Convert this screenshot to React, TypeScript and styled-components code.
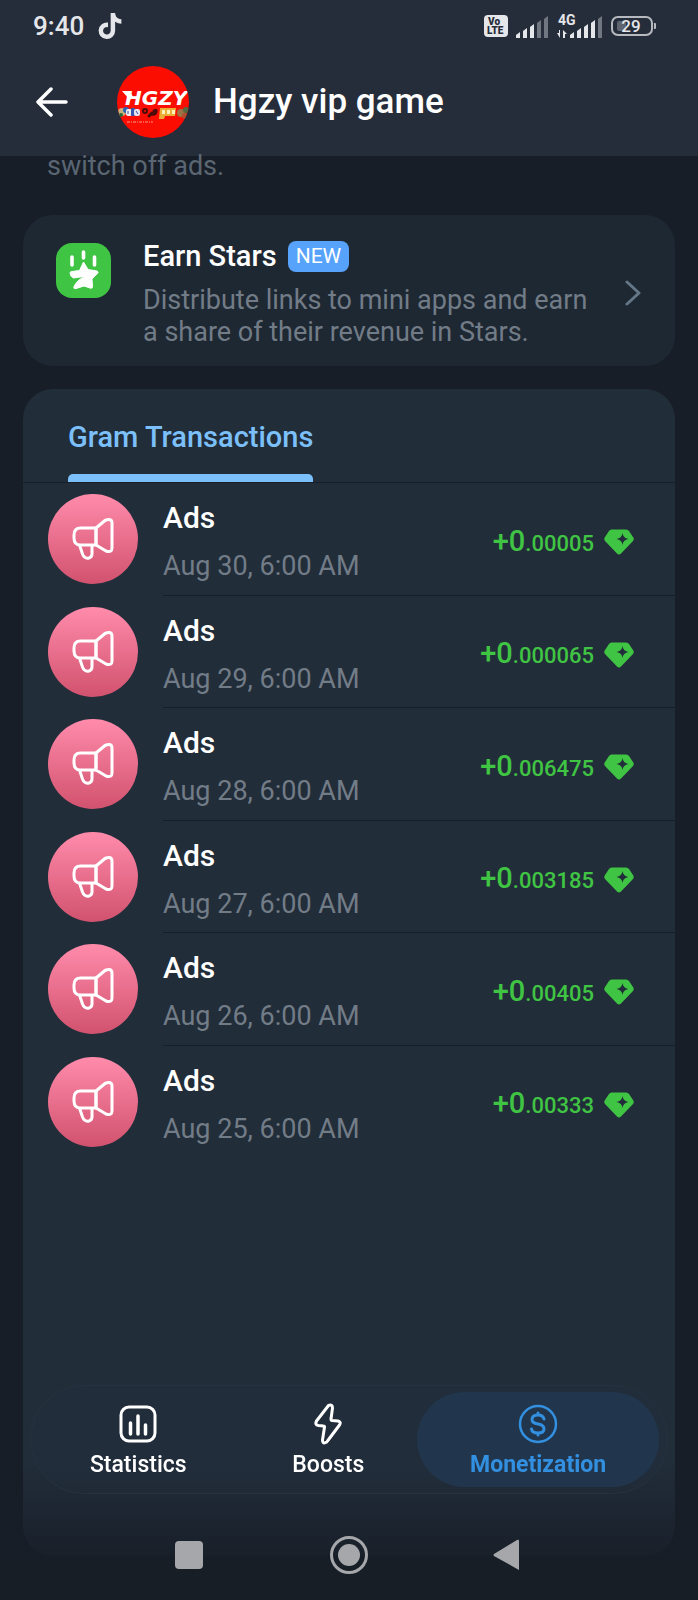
import React from "react";
import styled, { createGlobalStyle } from "styled-components";
import { FaTiktok } from "react-icons/fa";

const colors = {
  page: "#171e27",
  header: "#262d3a",
  card: "#1e2833",
  panel: "#222d3a",
  line: "#161f29",
  muted: "#727c87",
  accent: "#7cc0fb",
  active: "#3390e0",
  green: "#40c443",
  status: "#e4e6ea",
};

const GlobalStyle = createGlobalStyle`
  *, *::before, *::after { box-sizing: border-box; }
  body {
    margin: 0;
    background: ${colors.page};
    color: #fff;
    font-family: Roboto, "Liberation Sans", sans-serif;
  }
  button { font: inherit; color: inherit; border: 0; padding: 0; background: none; cursor: pointer; }
  h1, h2, p, ul { margin: 0; padding: 0; }
  svg { display: block; flex: none; }
`;

const Page = styled.div`
  min-height: 100vh;
  display: flex;
  flex-direction: column;
`;

const Header = styled.header`
  background: ${colors.header};
`;

const StatusBar = styled.div`
  height: 52px;
  padding: 0 42px 0 33px;
  display: flex;
  align-items: center;
  justify-content: space-between;
  color: ${colors.status};
`;

const StatusGroup = styled.div<{ $gap: number }>`
  display: flex;
  align-items: center;
  gap: ${(p) => p.$gap}px;
`;

const Clock = styled.time`
  font-size: 26px;
  line-height: 32px;
  font-weight: 500;
`;

const Toolbar = styled.div`
  height: 104px;
  padding: 0 34px 4px;
  display: flex;
  align-items: center;
`;

const BackButton = styled.button`
  width: 36px;
  height: 48px;
  display: grid;
  place-items: center;
`;

const Avatar = styled.svg`
  margin: 0 24px 0 47px;
`;

const Title = styled.h1`
  font-size: 35px;
  line-height: 40px;
  font-weight: 500;
`;

const Content = styled.main`
  flex: 1;
  display: flex;
  flex-direction: column;
  gap: 23px;
  padding: 0 23px 44px;
`;

const Hint = styled.p`
  height: 36px;
  padding-left: 24px;
  font-size: 27px;
  line-height: 20px;
  color: #5b6673;
`;

const EarnCard = styled.a`
  padding: 22px 34px 18px 33px;
  display: flex;
  align-items: flex-start;
  border-radius: 30px;
  background: ${colors.card};
  color: inherit;
  text-decoration: none;
`;

const EarnBody = styled.div`
  flex: 1;
  margin: 3px 0 0 32px;
`;

const EarnHeading = styled.div`
  display: flex;
  align-items: center;
  gap: 11px;
  height: 32px;
`;

const EarnTitle = styled.h2`
  font-size: 29px;
  line-height: 32px;
  font-weight: 500;
`;

const Badge = styled.span`
  padding: 0 8px;
  border-radius: 8px;
  background: #57a2fb;
  font-size: 21px;
  line-height: 31px;
`;

const EarnText = styled.p`
  margin-top: 12px;
  max-width: 460px;
  font-size: 27px;
  line-height: 32px;
  color: ${colors.muted};
`;

const EarnIcon = styled.svg`
  margin-top: 6px;
`;

const Chevron = styled.svg`
  align-self: center;
`;

const Panel = styled.section`
  flex: 1;
  border-radius: 30px;
  background: ${colors.panel};
`;

const Tabs = styled.div`
  height: 94px;
  padding: 0 45px;
  display: flex;
  border-bottom: 1px solid ${colors.line};
`;

const Tab = styled.button`
  padding-top: 32px;
  display: flex;
  flex-direction: column;
  justify-content: space-between;
  color: ${colors.accent};
  font-size: 29px;
  line-height: 32px;
  font-weight: 500;
`;

const TabMarker = styled.span`
  width: 100%;
  height: 8px;
  border-radius: 5px 5px 0 0;
  background: ${colors.accent};
`;

const List = styled.ul`
  min-height: 675px;
  list-style: none;
  display: grid;
  grid-auto-rows: 1fr;
`;

const Row = styled.li`
  padding-left: 25px;
  display: flex;
  gap: 25px;
`;

const RowIcon = styled.div`
  width: 90px;
  height: 90px;
  margin-top: 11px;
  border-radius: 50%;
  background: linear-gradient(#ff8bab, #d1526e);
  display: grid;
  place-items: center;
`;

const RowBody = styled.div`
  flex: 1;
  display: flex;
  justify-content: space-between;
  align-items: center;
  padding: 7px 41px 0 0;
  border-bottom: 1px solid ${colors.line};

  ${Row}:last-child & { border-bottom-color: transparent; }
`;

const RowTitle = styled.h2`
  font-size: 30px;
  line-height: 36px;
  font-weight: 500;
`;

const RowDate = styled.p`
  margin-top: 12px;
  font-size: 27px;
  line-height: 36px;
  color: ${colors.muted};
`;

const Amount = styled.div`
  display: flex;
  align-items: center;
  gap: 10px;
  color: ${colors.green};
  font-size: 29px;
  line-height: 36px;
  font-weight: 500;
`;

const Fraction = styled.span`
  font-size: 22px;
`;

const Dock = styled.div`
  position: fixed;
  inset: auto 0 0 0;
  padding: 0 30px;
  background: linear-gradient(rgba(23, 30, 39, 0) 80px, rgba(23, 30, 39, 0.9) 176px);
`;

const NavPill = styled.nav`
  height: 109px;
  padding: 6px 8px 6px 6px;
  display: flex;
  border: 1px solid #26323f;
  border-radius: 55px;
  background: linear-gradient(#222d3b 75%, #202a37);
`;

const NavItem = styled.button<{ $active?: boolean }>`
  flex: 1 1 auto;
  padding-top: 3px;
  display: flex;
  flex-direction: column;
  align-items: center;
  justify-content: center;
  gap: 6px;
  border-radius: 48px;
  background: ${(p) => (p.$active ? "#21364c" : "transparent")};
  color: ${(p) => (p.$active ? colors.active : "#fff")};
  font-size: 23px;
  line-height: 28px;
  font-weight: ${(p) => (p.$active ? 700 : 500)};
`;

const SystemBar = styled.div`
  height: 106px;
  padding-top: 16px;
  display: flex;
  justify-content: center;
  align-items: center;
`;

const SystemButton = styled.button`
  width: 160px;
  height: 60px;
  display: grid;
  place-items: center;
  color: #a5a7ab;
`;

const Signal = ({ bars, network }: { bars: number; network?: string }) => (
  <svg width={network ? 46 : 33} height="32" viewBox={network ? "-13 -4 46 32" : "0 -4 33 32"} fill="currentColor">
    {[5, 9, 13, 17, 21].map((h, i) => (
      <path
        key={h}
        d={`M${i * 7} ${24 - h + 2}l4-3v${h + 1}h-4z`}
        opacity={i < bars ? 1 : 0.4}
      />
    ))}
    {network && (
      <>
        <text x="-12" y="11" fontSize="14" fontWeight="700">{network}</text>
        <path d="M-11 16v3h-2l3 5v-8zM-7 24v-8l4 4h-2v4z" />
      </>
    )}
  </svg>
);

const VoLte = () => (
  <svg width="24" height="22" viewBox="0 0 24 22">
    <rect width="24" height="22" rx="4" fill="currentColor" />
    <g fill={colors.header} fontWeight="900" fontSize="10">
      <text x="4" y="10">Vo</text>
      <text x="3" y="19">LTE</text>
    </g>
  </svg>
);

const Battery = ({ level }: { level: number }) => (
  <svg width="45" height="20" viewBox="0 0 45 20">
    <rect x="6" y="5" width="9" height="10" rx="2" fill="#5f6570" />
    <rect x="1" y="1" width="40" height="18" rx="6" fill="none" stroke="#b6b9bf" strokeWidth="2" />
    <path d="M43 7h1q1 0 1 1v4q0 1-1 1h-1z" fill="#b6b9bf" />
    <text x="20" y="16" textAnchor="middle" fontSize="17" fontWeight="500" fill="currentColor">{level}</text>
  </svg>
);

const ChannelAvatar = () => (
  <Avatar width="72" height="72" viewBox="0 0 72 72" role="img" aria-label="Channel picture">
    <defs>
      <clipPath id="round"><circle cx="36" cy="36" r="36" /></clipPath>
    </defs>
    <g clipPath="url(#round)">
      <rect width="72" height="72" fill="#fb0d02" />
      <path d="M5 25h8l3 6-3 3z" fill="#fff" />
      <text x="8" y="39" fontFamily="DejaVu Sans, sans-serif" fontSize="20" fontWeight="700" fontStyle="italic" fill="#fff">HGZY</text>
      <circle cx="5" cy="46" r="4" fill="#c9b07b" />
      <circle cx="9" cy="44" r="3" fill="#2c64b5" />
      <circle cx="4" cy="49" r="2" fill="#276b3c" />
      <rect x="9" y="43" width="6" height="7" rx="2" fill="#eee" />
      <rect x="14" y="42" width="4" height="8" rx="1" fill="#3656b0" />
      <rect x="17" y="43" width="6" height="7" rx="2" fill="#e6e4f3" />
      <path d="M11 45v3M19 45l2 3" stroke="#3d4aa0" strokeWidth="1" />
      <circle cx="28" cy="45" r="2" fill="none" stroke="#4b0b09" strokeWidth="2" />
      <path d="M32 50l3-3M37 45q3-2 2 1t-4 2" fill="none" stroke="#4b0b09" strokeWidth="3" strokeLinecap="round" />
      <path d="M43 42h16l-1 8H48l-1 3h-5z" fill="#ebae35" />
      <path d="M45 44h3v4h-3zM50 44h3v4h-3zM55 44h3v4h-3z" fill="#fff0b8" />
      <circle cx="64" cy="47" r="4" fill="#9b7344" />
      <circle cx="69" cy="44" r="3" fill="#526c42" />
      <circle cx="68" cy="50" r="3" fill="#b04e2e" />
      <path d="M10 56h26" stroke="#ff9c8e" strokeWidth="1" strokeDasharray="3 1 1 1" />
    </g>
  </Avatar>
);

const StarsIcon = () => (
  <EarnIcon width="55" height="55" viewBox="0 0 55 55">
    <rect width="55" height="55" rx="16" fill={colors.green} />
    <path d="M16 14v8M27.500 9v6M38.500 14v8" stroke="#fff" strokeWidth="3.600" strokeLinecap="round" />
    <path
      d="M27.500 19l4.500 7.500 9 1.500q2 1 .5 2.500l-5.500 5.500.5 8q-.5 2-2.500 1l-6-2-8 2.500q-3 .5-2-2 4-8 12-10-7 .5-12.500 1.500-3-1-3.500-5 0-1.500 2-1.500l7.500-1z"
      fill="#fff" stroke="#fff" strokeWidth="1" strokeLinejoin="round"
    />
  </EarnIcon>
);

const Megaphone = () => (
  <svg width="42" height="42" viewBox="0 0 42 42" fill="none" stroke="#fff" strokeWidth="3" strokeLinejoin="round">
    <path d="M24 10H8.500Q2 10 2 17v3q0 7 6.500 7H24z" />
    <path d="M24 10l9-7.500q7-3 7 3V30q0 5-6 3l-10-6z" />
    <path d="M7.500 27l3 9q2 5 6.500 4 3-1 3-4v-9" />
  </svg>
);

const Gem = () => (
  <svg width="30" height="26" viewBox="0 0 30 26" fill="currentColor">
    <path
      fillRule="evenodd"
      d="M7.500.5h14.500q2 0 3 1.500l4 6q1.500 2 0 4L17 24.500q-2 2-4 0L1 12q-1.500-2 0-4l4-6Q6 .5 7.500.5zM18.500 4q.5 5 6 6-5.500 1-6 6-.5-5-6-6 5.500-1 6-6z"
    />
  </svg>
);

const StatisticsIcon = () => (
  <svg width="40" height="42" viewBox="0 0 40 42" fill="none" stroke="currentColor" strokeWidth="3" strokeLinecap="round">
    <rect x="3" y="4" width="34" height="34" rx="8" />
    <path d="M12.500 20v11M20 13v18M27.500 22v9" strokeWidth="3.500" />
  </svg>
);

const BoostIcon = () => (
  <svg width="40" height="42" viewBox="0 0 40 42" fill="none" stroke="currentColor" strokeWidth="3" strokeLinejoin="round">
    <path d="M20.500 2.500L8.500 18q-2 4 2 4.500l5 .5q1 0 1 1l-2 13q0 4 3 2.500 1 0 2-1.500L31.500 22q2-3-1.500-4l-6-.5q-1 0-1-1.500l1.500-11q0-4-4-2.500z" />
  </svg>
);

const DollarIcon = () => (
  <svg width="40" height="42" viewBox="0 0 40 42" fill="none" stroke="currentColor" strokeWidth="3" strokeLinecap="round">
    <circle cx="20" cy="21" r="18" strokeWidth="2.500" />
    <path d="M26 16q-1-4-6-4-6 0-6 4.500 0 3.500 6 4.500t6 5q0 4-6 4t-6.500-4M20 10v2M20 30v2" />
  </svg>
);

const transactions = [
  { day: 30, fraction: "00005" },
  { day: 29, fraction: "000065" },
  { day: 28, fraction: "006475" },
  { day: 27, fraction: "003185" },
  { day: 26, fraction: "00405" },
  { day: 25, fraction: "00333" },
];

export default function App() {
  return (
    <Page>
      <GlobalStyle />
      <Header>
        <StatusBar>
          <StatusGroup $gap={13}>
            <Clock>9:40</Clock>
            <FaTiktok size={26} />
          </StatusGroup>
          <StatusGroup $gap={8}>
            <VoLte />
            <Signal bars={3} />
            <Signal bars={4} network="4G" />
            <Battery level={29} />
          </StatusGroup>
        </StatusBar>
        <Toolbar>
          <BackButton aria-label="Back">
            <svg width="32" height="30" viewBox="0 0 32 30" fill="none" stroke="#fff" strokeWidth="3.500" strokeLinecap="round" strokeLinejoin="round">
              <path d="M15 2L2 15l13 13M2 15h28" />
            </svg>
          </BackButton>
          <ChannelAvatar />
          <Title>Hgzy vip game</Title>
        </Toolbar>
      </Header>

      <Content>
        <Hint>switch off ads.</Hint>
        <EarnCard href="#earn-stars">
          <StarsIcon />
          <EarnBody>
            <EarnHeading>
              <EarnTitle>Earn Stars</EarnTitle>
              <Badge>NEW</Badge>
            </EarnHeading>
            <EarnText>Distribute links to mini apps and earn a share of their revenue in Stars.</EarnText>
          </EarnBody>
          <Chevron width="16" height="26" viewBox="0 0 16 26" fill="none" stroke="#637787" strokeWidth="3" strokeLinecap="round" strokeLinejoin="round">
            <path d="M2 2l12 11L2 24" />
          </Chevron>
        </EarnCard>

        <Panel>
          <Tabs role="tablist">
            <Tab role="tab" aria-selected="true">
              Gram Transactions
              <TabMarker />
            </Tab>
          </Tabs>
          <List>
            {transactions.map(({ day, fraction }) => (
              <Row key={day}>
                <RowIcon><Megaphone /></RowIcon>
                <RowBody>
                  <div>
                    <RowTitle>Ads</RowTitle>
                    <RowDate>Aug {day}, 6:00 AM</RowDate>
                  </div>
                  <Amount>
                    <span>+0<Fraction>.{fraction}</Fraction></span>
                    <Gem />
                  </Amount>
                </RowBody>
              </Row>
            ))}
          </List>
        </Panel>
      </Content>

      <Dock>
        <NavPill aria-label="Sections">
          <NavItem><StatisticsIcon />Statistics</NavItem>
          <NavItem><BoostIcon />Boosts</NavItem>
          <NavItem $active aria-current="page"><DollarIcon />Monetization</NavItem>
        </NavPill>
        <SystemBar>
          <SystemButton aria-label="Recent apps">
            <svg width="28" height="28"><rect width="28" height="28" rx="4" fill="currentColor" /></svg>
          </SystemButton>
          <SystemButton aria-label="Home">
            <svg width="38" height="38" viewBox="0 0 38 38">
              <circle cx="19" cy="19" r="17.500" fill="none" stroke="currentColor" strokeWidth="3" />
              <circle cx="19" cy="19" r="11" fill="currentColor" />
            </svg>
          </SystemButton>
          <SystemButton aria-label="Back to previous app">
            <svg width="32" height="32" viewBox="0 0 32 32">
              <path d="M26 1v30L1 17q-1-1 0-2L24 1q2-1 2 1z" fill="currentColor" />
            </svg>
          </SystemButton>
        </SystemBar>
      </Dock>
    </Page>
  );
}
